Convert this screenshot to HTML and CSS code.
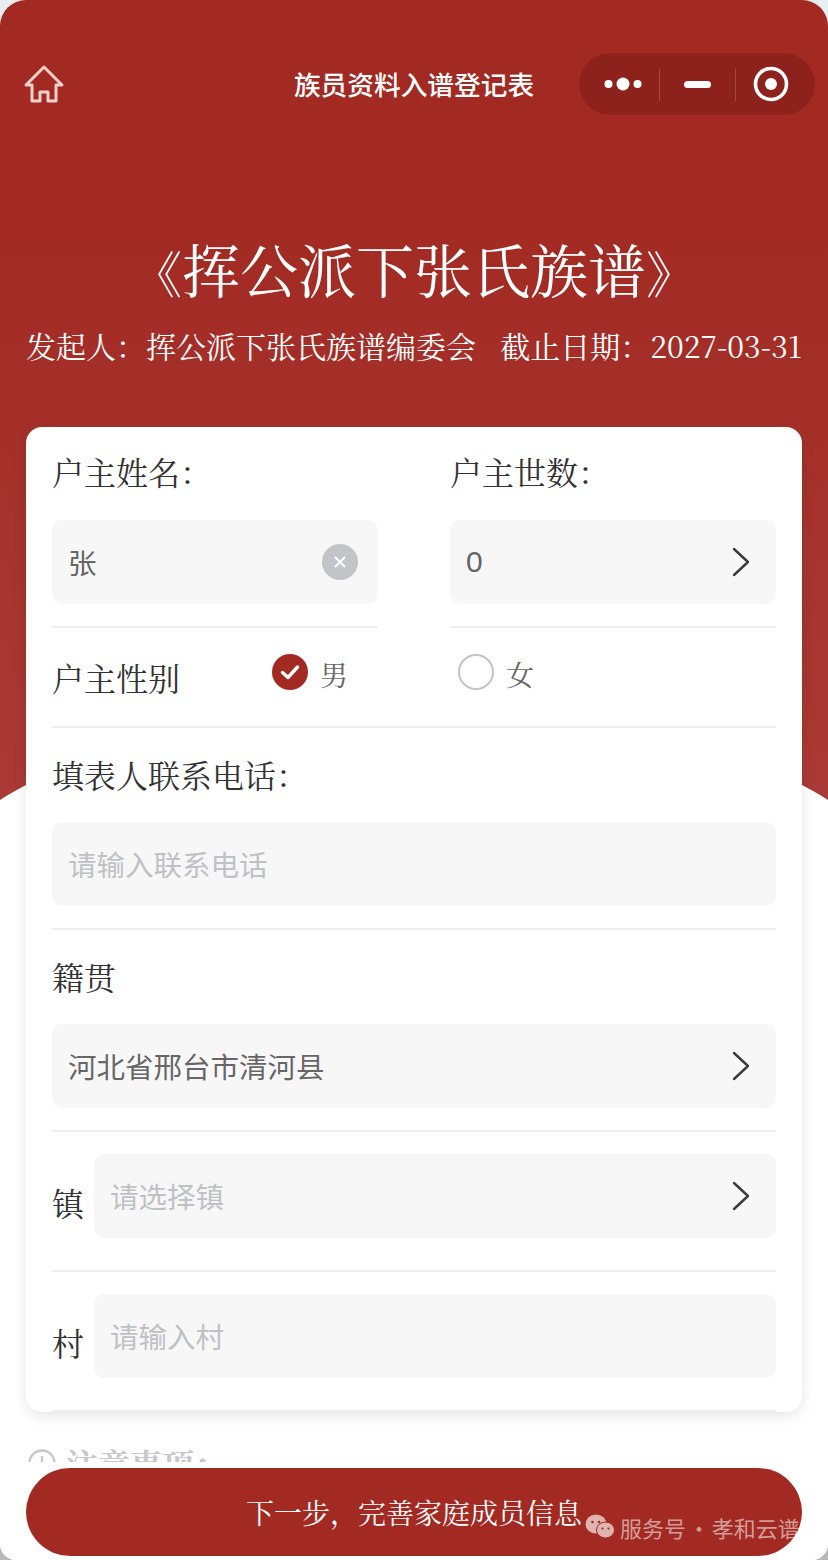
FILE: index.html
```html
<!DOCTYPE html>
<html lang="zh-CN">
  <head>
    <meta charset="UTF-8" />
    <meta name="viewport" content="width=device-width, initial-scale=1.0" />
    <title>族员资料入谱登记表</title>
    <link rel="stylesheet" href="styles.css">
  </head>
  <body>
    <div class="page">
      <div class="hero-bg"></div>
      <div class="hump"></div>

      <div class="content">
        <div class="navbar">
          <svg class="home-icon" viewBox="0 0 40 38" fill="none">
            <path d="M20 2 L38 20 L32 20 L32 36 L24 36 L24 27 L16 27 L16 36 L8 36 L8 20 L2 20 Z" stroke="#f8d0cc" stroke-width="3" stroke-linejoin="round" />
          </svg>
          <div class="nav-title">族员资料入谱登记表</div>
          <div class="capsule">
            <svg class="cap-dots" viewBox="0 0 38 14"><circle cx="4.5" cy="7" r="4" fill="#fff" /><circle cx="19" cy="7" r="6.5" fill="#fff" /><circle cx="33.5" cy="7" r="4" fill="#fff" /></svg>
            <span class="cap-line"></span>
            <span class="cap-minus"></span>
            <span class="cap-line"></span>
            <svg class="cap-target" viewBox="0 0 36 36"><circle cx="18" cy="18" r="15.5" fill="none" stroke="#fff" stroke-width="3.6" /><circle cx="18" cy="18" r="6" fill="#fff" /></svg>
          </div>
        </div>

        <h1 class="title"><span class="bracket">《</span>挥公派下张氏族谱<span class="bracket">》</span></h1>
        <p class="subtitle"><span>发起人&#xFF1A;挥公派下张氏族谱编委会</span><span>截止日期&#xFF1A;2027-03-31</span></p>

        <div class="card">
          <div class="two-col">
            <div class="col">
              <div class="label">户主姓名&#xFF1A;</div>
              <div class="box">
                <span class="val">张</span>
                <svg class="clear-icon" viewBox="0 0 36 36"><circle cx="18" cy="18" r="18" fill="#c2c4c7" /><path d="M13 13 L23 23 M23 13 L13 23" stroke="#fff" stroke-width="1.8" /></svg>
              </div>
              <div class="line"></div>
            </div>
            <div class="col">
              <div class="label">户主世数&#xFF1A;</div>
              <div class="box">
                <span class="val num">0</span>
                <svg class="arrow" viewBox="0 0 18 30" fill="none"><path d="M2 2 L16 15 L2 28" stroke="#3c3c3c" stroke-width="2.4" stroke-linecap="round" stroke-linejoin="round" /></svg>
              </div>
              <div class="line"></div>
            </div>
          </div>

          <div class="gender-row">
            <div class="gender-label">户主性别</div>
            <div class="radio radio-male">
              <svg class="radio-icon" viewBox="0 0 36 36"><circle cx="18" cy="18" r="18" fill="#a22a23" /><path d="M10.5 18.5 L16 23.5 L25.5 13" fill="none" stroke="#fff" stroke-width="3.4" stroke-linecap="round" stroke-linejoin="round" /></svg>
              <span>男</span>
            </div>
            <div class="radio radio-female">
              <svg class="radio-icon" viewBox="0 0 36 36"><circle cx="18" cy="18" r="17" fill="#fff" stroke="#c4c4c4" stroke-width="2" /></svg>
              <span>女</span>
            </div>
          </div>
          <div class="line"></div>

          <div class="label label-gap">填表人联系电话&#xFF1A;</div>
          <div class="box"><span class="val hint">请输入联系电话</span></div>
          <div class="line"></div>

          <div class="label label-gap">籍贯</div>
          <div class="box">
            <span class="val">河北省邢台市清河县</span>
            <svg class="arrow" viewBox="0 0 18 30" fill="none"><path d="M2 2 L16 15 L2 28" stroke="#3c3c3c" stroke-width="2.4" stroke-linecap="round" stroke-linejoin="round" /></svg>
          </div>
          <div class="line"></div>

          <div class="inline-row">
            <div class="inline-label">镇</div>
            <div class="box">
              <span class="val hint">请选择镇</span>
              <svg class="arrow" viewBox="0 0 18 30" fill="none"><path d="M2 2 L16 15 L2 28" stroke="#3c3c3c" stroke-width="2.4" stroke-linecap="round" stroke-linejoin="round" /></svg>
            </div>
          </div>
          <div class="line line-wide"></div>

          <div class="inline-row">
            <div class="inline-label">村</div>
            <div class="box"><span class="val hint">请输入村</span></div>
          </div>
          <div class="line line-last"></div>
        </div>

        <div class="notice">
          <svg class="notice-icon" viewBox="0 0 28 28" fill="none"><circle cx="14" cy="14" r="12.5" stroke="#c8c8c8" stroke-width="2.4" /><path d="M14 7 V16" stroke="#c8c8c8" stroke-width="2.4" /></svg>
          <span>注意事项&#xFF1A;</span>
        </div>
      </div>

      <div class="bottom-bar">
        <button class="next-btn">下一步&#xFF0C;完善家庭成员信息</button>
      </div>

      <div class="watermark">
        <svg class="wm-icon" viewBox="0 0 30 26"><ellipse cx="11" cy="10" rx="10.5" ry="9.5" fill="#dfb3ae" /><ellipse cx="20.5" cy="16" rx="9" ry="8" fill="#dfb3ae" stroke="#a22a23" stroke-width="1" /><circle cx="7.5" cy="8" r="1.3" fill="#a22a23" /><circle cx="14" cy="8" r="1.3" fill="#a22a23" /><circle cx="17.5" cy="14.5" r="1.1" fill="#a22a23" /><circle cx="23.5" cy="14.5" r="1.1" fill="#a22a23" /></svg>
        <span>服务号 · 孝和云谱</span>
      </div>
    </div>
  </body>
</html>
```

FILE: styles.css
```css
* {
  box-sizing: border-box;
}
body {
  margin: 0;
  background: linear-gradient(180deg, #e8eef0 0%, #e8eef0 50%, #b8b8b8 100%);
  font-family: "Noto Serif CJK SC", "Liberation Serif", "Noto Sans CJK SC", serif;
}
.page {
  position: relative;
  width: 828px;
  height: 1560px;
  overflow: hidden;
  background-color: #fff;
  border-radius: 26px 26px 16px 16px;
}
.hero-bg {
  position: absolute;
  top: 0;
  left: 0;
  width: 100%;
  height: 820px;
  background: linear-gradient(180deg, #a22a23 0%, #a22a23 25%, #aa3a36 100%);
}
.hump {
  position: absolute;
  left: -66px;
  top: 711px;
  width: 960px;
  height: 360px;
  border-radius: 50%;
  background-color: #fff;
}
.content {
  position: relative;
  padding: 0 26px;
}
.navbar {
  position: relative;
  height: 233px;
  display: flex;
  justify-content: center;
  padding-top: 66px;
}
.home-icon {
  position: absolute;
  left: -2px;
  top: 65px;
  width: 40px;
  height: 38px;
}
.nav-title {
  height: 36px;
  font-family: "Noto Sans CJK SC", sans-serif;
  font-size: 26.7px;
  font-weight: 500;
  line-height: 36px;
  color: #fff;
}
.capsule {
  position: absolute;
  top: 53px;
  right: -13px;
  width: 236px;
  height: 62px;
  border-radius: 31px;
  background-color: #8d211c;
  border: 1px solid #932520;
  display: flex;
  align-items: center;
  padding-left: 24px;
}
.cap-dots {
  width: 38px;
  height: 14px;
}
.cap-line {
  width: 1px;
  height: 33px;
  margin: 0 24px 0 17px;
  background-color: #a8453f;
}
.cap-minus {
  width: 27px;
  height: 7px;
  border-radius: 4px;
  background-color: #fff;
}
.cap-minus + .cap-line {
  margin: 0 17px 0 24px;
}
.cap-target {
  width: 36px;
  height: 36px;
}
.title {
  margin: 0;
  font-size: 58px;
  font-weight: 400;
  line-height: 70px;
  text-align: center;
  color: #fff;
  white-space: nowrap;
}
.bracket {
  font-size: 50px;
}
.subtitle {
  margin: 18px 0 0;
  height: 42px;
  display: flex;
  justify-content: space-between;
  font-size: 30px;
  line-height: 42px;
  color: #fff;
  white-space: nowrap;
}
.card {
  margin-top: 61px;
  height: 985px;
  padding: 24px 26px 0;
  background-color: #fff;
  border-radius: 16px;
  box-shadow: 0 4px 14px rgba(0, 0, 0, 0.1);
}
.two-col {
  display: flex;
  gap: 72px;
}
.col {
  width: 326px;
}
.label {
  font-size: 32px;
  line-height: 40px;
  color: #333;
  margin-bottom: 28px;
}
.col .label {
  margin-bottom: 29px;
}
.label-gap {
  margin-top: 26px;
}
.box {
  height: 84px;
  padding: 0 26px 0 16px;
  display: flex;
  align-items: center;
  justify-content: space-between;
  background-color: #f7f7f8;
  border-radius: 10px;
}
.val {
  font-family: "Noto Sans CJK SC", sans-serif;
  font-size: 28.5px;
  line-height: 40px;
  color: #666;
}
.num {
  font-family: "Liberation Sans", sans-serif;
  font-size: 30px;
}
.hint {
  color: #bfc1c5;
}
.clear-icon {
  width: 36px;
  height: 36px;
  margin-right: -6px;
}
.arrow {
  width: 18px;
  height: 30px;
}
.line {
  height: 2px;
  margin-top: 22px;
  background-color: #eeeeee;
}
.gender-row {
  height: 98px;
  position: relative;
  display: flex;
  align-items: center;
}
.gender-label {
  font-size: 32px;
  line-height: 40px;
  color: #333;
}
.radio {
  position: absolute;
  top: 26px;
  display: flex;
  align-items: center;
  gap: 12px;
  font-size: 28px;
  line-height: 36px;
  color: #666;
}
.radio span {
  position: relative;
  top: 2px;
}
.radio-male {
  left: 220px;
}
.radio-female {
  left: 406px;
}
.radio-icon {
  width: 36px;
  height: 36px;
}
.gender-row + .line {
  margin-top: 0;
}
.inline-row {
  display: flex;
  align-items: flex-end;
  gap: 10px;
  margin-top: 22px;
}
.inline-row .box {
  flex: 1;
}
.inline-label {
  width: 32px;
  font-size: 32px;
  line-height: 40px;
  color: #333;
  margin-bottom: 16px;
}
.line-wide {
  margin-top: 32px;
}
.line-last {
  margin-top: 32px;
}
.notice {
  display: flex;
  align-items: center;
  gap: 10px;
  margin-top: 31px;
  padding-left: 2px;
  font-size: 32px;
  font-weight: 700;
  line-height: 40px;
  color: #c8c8c8;
}
.notice-icon {
  width: 28px;
  height: 28px;
}
.bottom-bar {
  position: absolute;
  left: 0;
  right: 0;
  bottom: 0;
  height: 98px;
  padding: 6px 26px 4px;
  background-color: #fff;
}
.next-btn {
  display: block;
  width: 100%;
  height: 88px;
  border: none;
  border-radius: 44px;
  background-color: #a22a23;
  color: #fff;
  font-family: inherit;
  font-size: 28px;
}
.watermark {
  position: absolute;
  left: 585px;
  top: 1512px;
  display: flex;
  align-items: center;
  gap: 5px;
  font-family: "Noto Sans CJK SC", sans-serif;
  font-size: 22px;
  line-height: 30px;
  word-spacing: -3px;
  color: rgba(255, 255, 255, 0.55);
  white-space: nowrap;
}
.wm-icon {
  width: 30px;
  height: 26px;
  flex-shrink: 0;
}
```
